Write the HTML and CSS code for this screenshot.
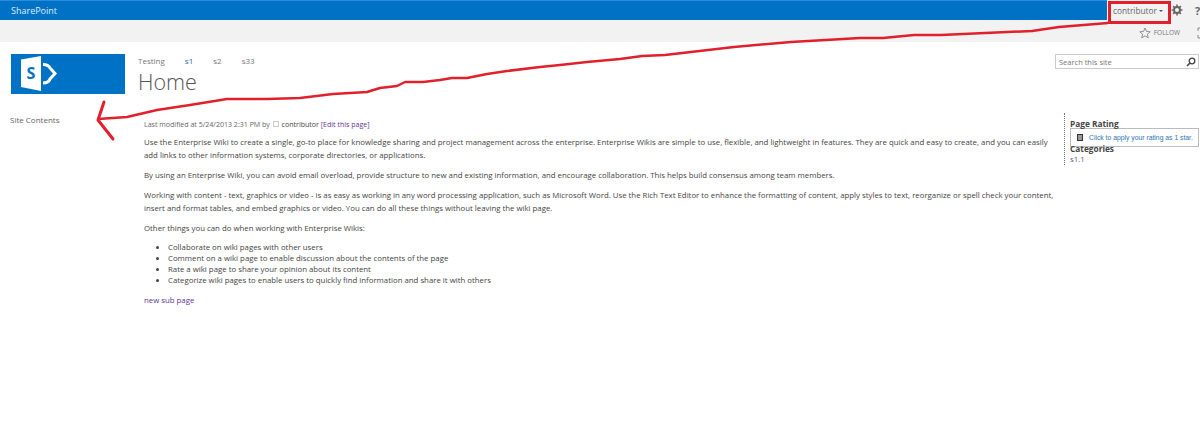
FILE: index.html
```html
<!DOCTYPE html>
<html lang="en">
<head>
<meta charset="utf-8">
<title>Home</title>
<link rel="stylesheet" href="styles.css">
</head>
<body>
<header class="suite">
  <div class="suite-brand">SharePoint</div>
  <div class="suite-user">contributor <span class="caret"></span></div>
  <svg class="gear" viewBox="0 0 12 12" width="12" height="12"><circle cx="6" cy="6" r="3" fill="none" stroke="#666" stroke-width="2"/><path d="M6 .5v2M6 9.500v2M.5 6h2M9.500 6h2M2.100 2.100l1.400 1.400M8.500 8.500l1.400 1.400M2.100 9.900l1.400-1.400M8.500 3.500l1.400-1.400" stroke="#666" stroke-width="1.600"/></svg>
  <div class="help">?</div>
</header>
<div class="ribbon">
  <svg class="star" viewBox="0 0 12 12" width="12" height="12"><path d="M6 1l1.500 3.400 3.700.4-2.800 2.400.9 3.600L6 8.900l-3.300 1.900.9-3.600L.8 4.800l3.700-.4z" fill="none" stroke="#777" stroke-width=".8"/></svg>
  <span class="follow">FOLLOW</span>
  <svg class="focus" viewBox="0 0 10 12" width="10" height="12"><path d="M2 1h7M2 1v3M2 8v3M2 11h7" fill="none" stroke="#888" stroke-width="1"/></svg>
</div>
<div class="head">
  <div class="logo">
    <svg viewBox="0 0 40 38" width="40" height="38"><path d="M2 3.500L22 0v35L2 31z" fill="#fff"/><path d="M24 8.500C28 8.500 30 10 31 12L36 17.500L31 23C30 26 28 27 24 27" fill="none" stroke="#fff" stroke-width="3"/><text x="12" y="23" class="logo-s">S</text></svg>
  </div>
  <div class="titles">
    <nav class="topnav"><span>Testing</span><a class="current">s1</a><span>s2</span><span>s33</span></nav>
    <h1>Home</h1>
  </div>
  <div class="search"><span>Search this site</span>
    <svg viewBox="0 0 10 10" width="10" height="10"><circle cx="6" cy="4" r="2.800" fill="none" stroke="#444" stroke-width="1.300"/><path d="M4 6L1 9" stroke="#444" stroke-width="1.600"/></svg>
  </div>
</div>
<div class="layout">
  <aside class="leftnav">Site Contents</aside>
  <main class="content">
    <div class="meta">Last modified at 5/24/2013 2:31 PM by <span class="presence"></span> <span class="author">contributor</span> <a class="visited">[Edit this page]</a></div>
    <p>Use the Enterprise Wiki to create a single, go-to place for knowledge sharing and project management across the enterprise. Enterprise Wikis are simple to use, flexible, and lightweight in features. They are quick and easy to create, and you can easily add links to other information systems, corporate directories, or applications.</p>
    <p>By using an Enterprise Wiki, you can avoid email overload, provide structure to new and existing information, and encourage collaboration. This helps build consensus among team members.</p>
    <p>Working with content - text, graphics or video - is as easy as working in any word processing application, such as Microsoft Word. Use the Rich Text Editor to enhance the formatting of content, apply styles to text, reorganize or spell check your content, insert and format tables, and embed graphics or video. You can do all these things without leaving the wiki page.</p>
    <p>Other things you can do when working with Enterprise Wikis:</p>
    <ul>
      <li>Collaborate on wiki pages with other users</li>
      <li>Comment on a wiki page to enable discussion about the contents of the page</li>
      <li>Rate a wiki page to share your opinion about its content</li>
      <li>Categorize wiki pages to enable users to quickly find information and share it with others</li>
    </ul>
    <p><a class="visited">new sub page</a></p>
  </main>
  <aside class="side">
    <div class="side-title">Page Rating</div>
    <div class="rating"><span class="rate-icon"></span><span class="rate-text">Click to apply your rating as 1 star.</span></div>
    <div class="side-title cat">Categories</div>
    <a class="cat-link">s1.1</a>
  </aside>
</div>
<svg class="ink" viewBox="0 0 1200 442" width="1200" height="442">
  <rect x="1109.500" y="2.500" width="60" height="20" fill="none" stroke="#e2202c" stroke-width="3"/>
  <path d="M1108 23L1059 27L1032 31L941 35L914 35L883 38L860 38L791 42L734 47L665 55L642 56L620 59L587 62L560 65L540 67L507 71L487 74L467 78L452 78L440 80L423 82L405 82L397 86L380 88L367 92L333 94L300 98L267 99L227 99L190 105L157 110L127 117L98 119" fill="none" stroke="#e2202c" stroke-width="2.500" stroke-linejoin="round"/>
  <path d="M104 102L98 120L113 139" fill="none" stroke="#e2202c" stroke-width="3" stroke-linejoin="round" stroke-linecap="round"/>
</svg>
</body>
</html>
```
FILE: styles.css
```css
* { box-sizing: border-box; }
html, body { margin: 0; height: 442px; overflow: hidden; background: #fff; }
body { position: relative; font-family: "Open Sans", "Liberation Sans", sans-serif; font-size: 7.820px; color: #444; }
.suite { height: 20px; background: #f2f2f2; display: flex; align-items: center; }
.suite-brand { width: 1107px; height: 20px; background: #0072c6; border-top: 1px solid #2a8ddb; color: #dfeefa; font-size: 9px; line-height: 19px; padding-left: 11px; flex: none; }
.suite-user { width: 62px; flex: none; text-align: center; color: #666; font-size: 8.300px; }
.caret { display: inline-block; border: 2px solid transparent; border-top: 2.500px solid #555; border-bottom: 0; vertical-align: middle; }
.gear { margin-left: 2px; flex: none; }
.help { margin-left: 12px; font-weight: 700; font-size: 11px; color: #666; }
.ribbon { height: 22px; background: #f2f2f2; display: flex; align-items: center; justify-content: flex-end; margin-right: -6px; padding-top: 3px; }
.star { margin-right: 3px; }
.follow { font-size: 6.500px; color: #777; margin-right: 16px; }
.focus { margin-right: 0; }
.head { display: flex; height: 53px; padding: 12px 0 0 11px; }
.logo { width: 114px; height: 40px; background: #0072c6; flex: none; padding: 2px 0 0 8px; }
.logo-s { fill: #0072c6; font: 700 16px "Open Sans", sans-serif; text-anchor: middle; }
.titles { margin-left: 13px; width: 917px; flex: none; }
.topnav { display: flex; gap: 20px; font-size: 8px; color: #777; line-height: 14px; }
.topnav .current { color: #2b6ea8; }
h1 { margin: 0; font-weight: 300; font-size: 21.500px; line-height: 28px; color: #555; }
.search { width: 144px; height: 15px; border: 1px solid #ccc; display: flex; align-items: center; justify-content: space-between; padding: 0 2px 0 3px; font-size: 7.500px; color: #777; }
.layout { display: flex; }
.leftnav { width: 144px; padding: 18px 0 0 10px; flex: none; color: #666; font-size: 8px; line-height: 14px; }
.content { width: 916px; flex: none; padding-top: 23px; color: #444; }
.meta { font-size: 7.050px; color: #666; line-height: 12px; margin-bottom: 6px; }
.presence { display: inline-block; width: 6px; height: 6px; border: 1px solid #ccc; margin: 0 1px; }
.author { color: #444; }
.visited { color: #663399; }
p { margin: 0 0 7px; line-height: 13px; }
ul { margin: 6px 0 8px; padding-left: 24px; }
li { line-height: 11px; }
.side { margin-top: 18px; margin-left: 4px; padding-left: 5px; width: 136px; border-left: 1px dotted #777; height: 52px; line-height: 9px; }
.side-title { font-weight: 700; color: #444; font-size: 8.300px; height: 9px; margin-top: 6px; }
.rating { width: 129px; height: 19px; border: 1px solid #bbb; display: flex; align-items: center; padding-left: 6px; gap: 6px; background: #fff; font-family: "Liberation Sans", sans-serif; font-size: 6.800px; color: #2e75b5; }
.rate-icon { width: 6px; height: 7px; border: 1.500px solid #333; background: #999; flex: none; }
.side-title.cat { margin-top: -3px; }
.cat-link { display: block; margin-top: 2px; color: #555a8c; }
.ink { position: absolute; left: 0; top: 0; pointer-events: none; }
```
